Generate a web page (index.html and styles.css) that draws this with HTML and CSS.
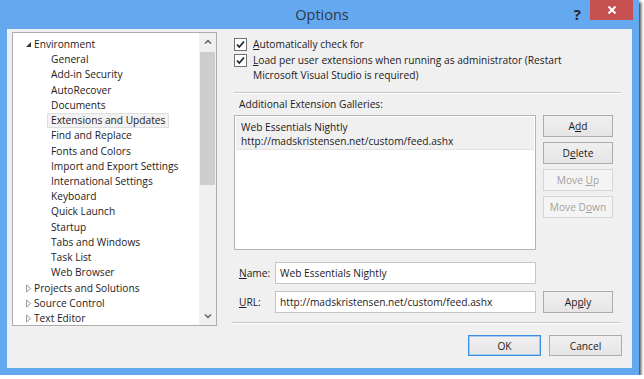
FILE: index.html
```html
<!DOCTYPE html>
<html lang="en">
<head>
  <meta charset="UTF-8">
  <title>Options</title>
  <link rel="stylesheet" href="styles.css">
</head>
<body>
  <div class="window">
    <!-- Title bar -->
    <div class="titlebar">
      <span class="title">Options</span>
      <span class="help">?</span>
      <span class="close">
        <svg width="10" height="8" viewBox="0 0 10 8"><path d="M1.5 0.5 L8.5 7.5 M8.5 0.5 L1.5 7.5" stroke="#fff" stroke-width="2"/></svg>
      </span>
    </div>

    <div class="client">
      <div class="main">
        <!-- Left: category tree -->
        <div class="tree">
          <div class="tree-items">
            <div class="tree-row top">
              <svg class="twisty" width="7" height="7" viewBox="0 0 7 7"><polygon points="6,1 6,6 1,6" fill="#333"/></svg>
              Environment
            </div>
            <div class="tree-row child">General</div>
            <div class="tree-row child">Add-in Security</div>
            <div class="tree-row child">AutoRecover</div>
            <div class="tree-row child">Documents</div>
            <div class="tree-row child"><span class="selected">Extensions and Updates</span></div>
            <div class="tree-row child">Find and Replace</div>
            <div class="tree-row child">Fonts and Colors</div>
            <div class="tree-row child">Import and Export Settings</div>
            <div class="tree-row child">International Settings</div>
            <div class="tree-row child">Keyboard</div>
            <div class="tree-row child">Quick Launch</div>
            <div class="tree-row child">Startup</div>
            <div class="tree-row child">Tabs and Windows</div>
            <div class="tree-row child">Task List</div>
            <div class="tree-row child">Web Browser</div>
            <div class="tree-row top">
              <svg class="twisty" width="7" height="9" viewBox="0 0 7 9"><polygon points="1.5,1 5.5,4.5 1.5,8" fill="none" stroke="#999"/></svg>
              Projects and Solutions
            </div>
            <div class="tree-row top">
              <svg class="twisty" width="7" height="9" viewBox="0 0 7 9"><polygon points="1.5,1 5.5,4.5 1.5,8" fill="none" stroke="#999"/></svg>
              Source Control
            </div>
            <div class="tree-row top">
              <svg class="twisty" width="7" height="9" viewBox="0 0 7 9"><polygon points="1.5,1 5.5,4.5 1.5,8" fill="none" stroke="#999"/></svg>
              Text Editor
            </div>
          </div>
          <div class="scrollbar">
            <div class="sb-arrow">
              <svg width="8" height="5" viewBox="0 0 8 5"><polyline points="1,4.5 4,1.5 7,4.5" fill="none" stroke="#606060" stroke-width="1.5"/></svg>
            </div>
            <div class="sb-track">
              <div class="sb-thumb"></div>
            </div>
            <div class="sb-arrow">
              <svg width="8" height="5" viewBox="0 0 8 5"><polyline points="1,0.5 4,3.5 7,0.5" fill="none" stroke="#606060" stroke-width="1.5"/></svg>
            </div>
          </div>
        </div>

        <!-- Right: Extensions and Updates page -->
        <div class="settings">
          <div class="check-row">
            <span class="checkbox"><svg width="11" height="11" viewBox="0 0 11 11"><path d="M2 5.5 L4.3 8 L9 2.5" fill="none" stroke="#222" stroke-width="1.7"/></svg></span>
            <span class="check-label"><u>A</u>utomatically check for</span>
          </div>
          <div class="check-row">
            <span class="checkbox"><svg width="11" height="11" viewBox="0 0 11 11"><path d="M2 5.5 L4.3 8 L9 2.5" fill="none" stroke="#222" stroke-width="1.7"/></svg></span>
            <div class="check-label">
              <div><u>L</u>oad per user extensions when running as administrator (Restart</div>
              <div>Microsoft Visual Studio is required)</div>
            </div>
          </div>

          <div class="separator"></div>

          <div class="group-label">Additional Extension Galleries:</div>
          <div class="gallery-row">
            <div class="listbox">
              <div class="list-item">
                <div>Web Essentials Nightly</div>
                <div>http://madskristensen.net/custom/feed.ashx</div>
              </div>
            </div>
            <div class="button-col">
              <button class="btn">A<u>d</u>d</button>
              <button class="btn">D<u>e</u>lete</button>
              <button class="btn" disabled>Move <u>U</u>p</button>
              <button class="btn" disabled>Move D<u>o</u>wn</button>
            </div>
          </div>

          <div class="field-row name-row">
            <span class="field-label"><u>N</u>ame:</span>
            <div class="textbox">Web Essentials Nightly</div>
          </div>
          <div class="field-row">
            <span class="field-label"><u>U</u>RL:</span>
            <div class="textbox">http://madskristensen.net/custom/feed.ashx</div>
            <button class="btn">Ap<u>p</u>ly</button>
          </div>

          <div class="separator bottom"></div>
        </div>
      </div>

      <!-- Dialog buttons -->
      <div class="footer">
        <button class="btn dialog default">OK</button>
        <button class="btn dialog">Cancel</button>
      </div>
    </div>
  </div>
</body>
</html>
```

FILE: styles.css
```css
:root {
  --frame: #64a8f0;
  --client: #f0f0f0;
  --text: #1e1a22;
  --ui-font: 'Open Sans', 'Noto Sans', Arial, sans-serif;
}
body {
  margin: 0;
  background: #fff;
  font-family: var(--ui-font);
  font-size: 10.2px;
  color: var(--text);
}
u {
  text-decoration: underline;
  text-underline-offset: 1px;
}
.window {
  width: 639px;
  height: 375px;
  background: var(--frame);
  box-shadow: 2px 2px 3px rgba(0,0,0,0.75);
  display: flex;
  flex-direction: column;
}
/* Title bar */
.titlebar {
  position: relative;
  height: 29px;
  flex: none;
}
.title {
  display: block;
  text-align: center;
  line-height: 29px;
  font-size: 14.5px;
  color: #2c3a4a;
  padding-left: 5px;
}
.help {
  position: absolute;
  right: 58px;
  top: 4px;
  font-size: 15px;
  font-weight: 700;
  color: #1f2a36;
}
.close {
  position: absolute;
  right: 6px;
  top: 0;
  width: 43px;
  height: 20px;
  background: #c75050;
  display: flex;
  align-items: center;
  justify-content: center;
}
/* Client area */
.client {
  margin: 0 7px;
  width: 625px;
  height: 339px;
  background: var(--client);
  display: flex;
  flex-direction: column;
}
.main {
  display: flex;
  padding: 3px 0 0 5px;
}
/* Tree */
.tree {
  width: 203px;
  height: 292px;
  border: 1px solid #acacac;
  background: #fff;
  display: flex;
  overflow: hidden;
}
.tree-items {
  flex: 1;
  padding-top: 4px;
  overflow: hidden;
}
.tree-row {
  height: 15.22px;
  line-height: 15.22px;
  white-space: nowrap;
  display: flex;
  align-items: center;
}
.tree-row.top {
  padding-left: 10px;
}
.tree-row.top .twisty {
  width: 11px;
  flex: none;
}
.tree-row.child {
  padding-left: 38px;
}
.tree-row .selected {
  background: #f2f2f2;
  border: 1px solid #dedede;
  padding: 0 3px;
  margin-left: -4px;
  line-height: 13px;
}
.scrollbar {
  width: 17px;
  background: #f0f0f0;
  display: flex;
  flex-direction: column;
  flex: none;
}
.sb-arrow {
  height: 17px;
  display: flex;
  align-items: center;
  justify-content: center;
}
.sb-track {
  flex: 1;
  padding: 2px 1px 0 1px;
}
.sb-thumb {
  height: 133px;
  background: #cdcdcd;
}
/* Settings page */
.settings {
  width: 389px;
  margin-left: 15px;
  display: flex;
  flex-direction: column;
}
.check-row {
  display: flex;
  align-items: flex-start;
  padding-left: 2px;
  margin-top: 1px;
}
.check-row:first-child {
  margin-top: 4.5px;
}
.checkbox {
  width: 11px;
  height: 11px;
  border: 1px solid #707070;
  background: #fff;
  flex: none;
  margin-top: 1px;
  display: flex;
}
.check-label {
  margin-left: 6px;
  line-height: 15px;
  white-space: nowrap;
}
.separator {
  height: 0;
  border-top: 1px solid #c9c9c9;
  border-bottom: 1px solid #fff;
  margin: 9px 0 0 2px;
}
.separator.bottom {
  margin: 9px 0 0 0;
}
.group-label {
  padding-left: 7px;
  margin-top: 3px;
  line-height: 15px;
}
.gallery-row {
  display: flex;
  gap: 7px;
  margin-top: 3.5px;
  padding-left: 2px;
}
.listbox {
  width: 298px;
  height: 131px;
  border: 1px solid #b4b4b4;
  background: #fff;
  padding: 1px;
}
.list-item {
  background: #f0f0f0;
  border-bottom: 1px solid #e4e4e4;
  padding: 3px 5px 1px 5px;
  line-height: 14px;
}
.button-col {
  display: flex;
  flex-direction: column;
  gap: 5px;
}
.btn {
  width: 70px;
  height: 22px;
  font-family: var(--ui-font);
  font-size: 10.2px;
  color: var(--text);
  background: linear-gradient(#f0f0f0, #e5e5e5);
  border: 1px solid #acacac;
  padding: 0;
}
.btn:disabled {
  background: #f4f4f4;
  border-color: #d6d6d6;
  color: #a2a2a2;
}
.field-row {
  display: flex;
  align-items: center;
  gap: 7px;
  padding-left: 2px;
  margin-top: 7px;
}
.field-row.name-row {
  margin-top: 12px;
}
.field-label {
  width: 34px;
  padding-left: 5px;
  box-sizing: border-box;
}
.textbox {
  width: 255px;
  height: 20px;
  border: 1px solid #c6c6c6;
  background: #fff;
  padding-left: 4px;
  line-height: 20px;
}
/* Footer */
.footer {
  display: flex;
  justify-content: flex-end;
  gap: 8px;
  padding: 9px 10px 0 0;
}
.btn.dialog {
  width: 73px;
  height: 21px;
}
.btn.default {
  border-color: #3c8ee0;
  box-shadow: inset 0 0 0 1px #a6ccf2;
}
```
